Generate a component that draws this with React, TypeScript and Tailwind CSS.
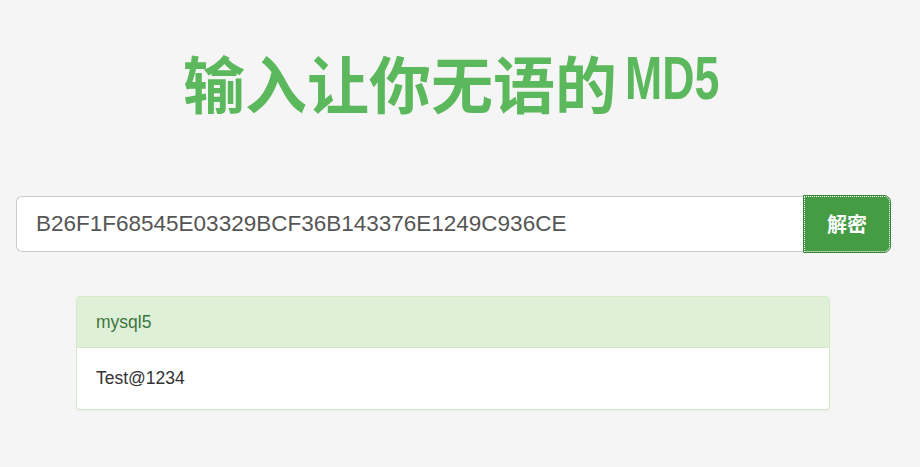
export default function App() {
  return (
    <div className="min-h-[467px] bg-[#f5f5f5] pt-[38px] font-['Liberation_Sans','Noto_Sans_CJK_SC',sans-serif]">
      <h1 className="flex justify-center pr-[18px] text-[62px] font-bold leading-[88px] text-[#5cb85c]">
        <span className="font-['Noto_Sans_CJK_SC',sans-serif]">输入让你无语的</span>
        {/* narrow heavy latin like SimHei */}
        <span className="ml-[8px] w-[94px] overflow-visible whitespace-nowrap">
          <span className="inline-block origin-left -translate-y-[4px] scale-x-[0.72] font-['Liberation_Sans',sans-serif]">
            MD5
          </span>
        </span>
      </h1>

      <div className="ml-[16px] mt-[70px] flex h-[56px] w-[874px]">
        <input
          readOnly
          value="B26F1F68545E03329BCF36B143376E1249C936CE"
          className="h-full min-w-0 flex-1 rounded-l-[6px] border border-r-0 border-[#ccc] bg-white px-[19px] text-[22.5px] text-[#555] outline-none"
        />
        <button
          type="button"
          className="h-full w-[86px] rounded-r-[6px] border border-dotted border-white bg-[#449d44] text-[20px] font-bold text-white outline outline-1 outline-[#398439] font-['Noto_Sans_CJK_SC',sans-serif]"
        >
          解密
        </button>
      </div>

      <div className="ml-[76px] mt-[44px] w-[754px] overflow-hidden rounded-[4px] border border-[#d6e9c6] bg-white shadow-[0_1px_1px_rgba(0,0,0,0.05)]">
        <div className="flex h-[51px] items-center border-b border-[#d6e9c6] bg-[#dff0d8] px-[19px] text-[17.5px] text-[#3c763d]">
          mysql5
        </div>
        <div className="flex h-[61px] items-center px-[19px] text-[17.5px] text-[#333]">Test@1234</div>
      </div>
    </div>
  );
}
